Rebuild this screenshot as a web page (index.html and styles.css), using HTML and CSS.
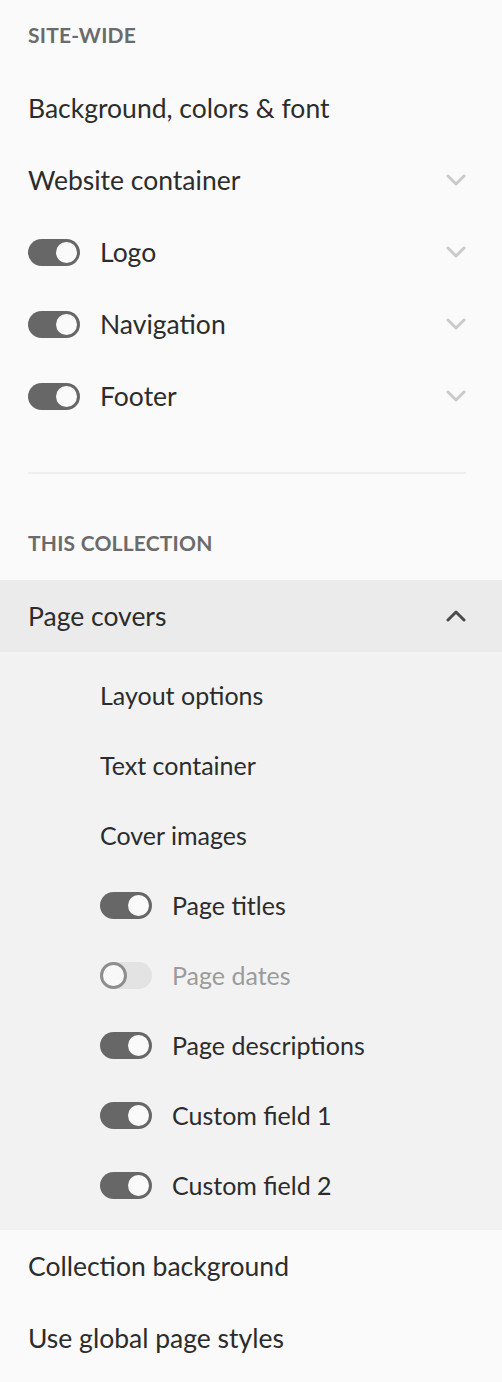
FILE: index.html
```html
<!DOCTYPE html>
<html lang="en">
<head>
<meta charset="utf-8">
<title>Design panel</title>
<link rel="stylesheet" href="styles.css">
</head>
<body>
<div class="panel">
  <div class="section-title">SITE-WIDE</div>
  <div class="row"><span class="label">Background, colors &amp; font</span></div>
  <div class="row"><span class="label">Website container</span>
    <svg class="chev" viewBox="0 0 20 12"><path d="M2 2 L10 10 L18 2"/></svg></div>
  <div class="row"><span class="toggle on"></span><span class="label">Logo</span>
    <svg class="chev" viewBox="0 0 20 12"><path d="M2 2 L10 10 L18 2"/></svg></div>
  <div class="row"><span class="toggle on"></span><span class="label">Navigation</span>
    <svg class="chev" viewBox="0 0 20 12"><path d="M2 2 L10 10 L18 2"/></svg></div>
  <div class="row"><span class="toggle on"></span><span class="label">Footer</span>
    <svg class="chev" viewBox="0 0 20 12"><path d="M2 2 L10 10 L18 2"/></svg></div>
  <div class="divider"></div>
  <div class="section-title">THIS COLLECTION</div>
  <div class="row open"><span class="label">Page covers</span>
    <svg class="chev up" viewBox="0 0 20 12"><path d="M2 10 L10 2 L18 10"/></svg></div>
  <div class="sub">
    <div class="subrow"><span class="label">Layout options</span></div>
    <div class="subrow"><span class="label">Text container</span></div>
    <div class="subrow"><span class="label">Cover images</span></div>
    <div class="subrow"><span class="toggle on"></span><span class="label">Page titles</span></div>
    <div class="subrow disabled"><span class="toggle off"></span><span class="label">Page dates</span></div>
    <div class="subrow"><span class="toggle on"></span><span class="label">Page descriptions</span></div>
    <div class="subrow"><span class="toggle on"></span><span class="label">Custom field 1</span></div>
    <div class="subrow"><span class="toggle on"></span><span class="label">Custom field 2</span></div>
  </div>
  <div class="row"><span class="label">Collection background</span></div>
  <div class="row"><span class="label">Use global page styles</span></div>
</div>
</body>
</html>
```
FILE: styles.css
```css
html, body {
  margin: 0;
  padding: 0;
  background: #fafafa;
}
body {
  font-family: Lato, "Open Sans", sans-serif;
  color: #2c2c2c;
}
.panel {
  display: flex;
  flex-direction: column;
  width: 502px;
}
.section-title {
  height: 72px;
  display: flex;
  align-items: center;
  padding: 0 28px 3px;
  font-size: 21px;
  letter-spacing: 0.2px;
  font-weight: 700;
  color: #6b6b6b;
  box-sizing: border-box;
}
.row {
  height: 72px;
  display: flex;
  align-items: center;
  padding: 0 36px 0 28px;
  font-size: 26.5px;
  box-sizing: border-box;
}
.row.open {
  background: #ebebeb;
}
.label {
  flex: 1;
}
.toggle {
  position: relative;
  width: 52px;
  height: 27px;
  border-radius: 14px;
  margin-right: 20px;
  flex: none;
  box-sizing: border-box;
}
.toggle::after {
  content: "";
  position: absolute;
  top: 3px;
  width: 21px;
  height: 21px;
  border-radius: 50%;
  box-sizing: border-box;
}
.toggle.on {
  background: #676767;
}
.toggle.on::after {
  right: 3px;
  background: #fafafa;
}
.toggle.off {
  background: #e3e3e3;
}
.toggle.off::after {
  left: 0;
  top: 0;
  width: 27px;
  height: 27px;
  background: #f8f8f8;
  border: 3.5px solid #8e8e8e;
}
.chev {
  width: 20px;
  height: 12px;
  flex: none;
}
.chev path {
  fill: none;
  stroke: #cbcbcb;
  stroke-width: 3;
  stroke-linecap: round;
  stroke-linejoin: round;
}
.chev.up path {
  stroke: #4b4b4b;
}
.divider {
  height: 2px;
  background: #eeeeee;
  margin: 40px 36px 0 28px;
}
.divider + .section-title {
  margin-top: 34px;
}
.sub {
  background: #f2f2f2;
  padding: 8px 0 10px;
  display: flex;
  flex-direction: column;
}
.subrow {
  height: 70px;
  display: flex;
  align-items: center;
  padding: 0 36px 0 100px;
  font-size: 25px;
  box-sizing: border-box;
}
.subrow.disabled .label {
  color: #9b9b9b;
}
```
